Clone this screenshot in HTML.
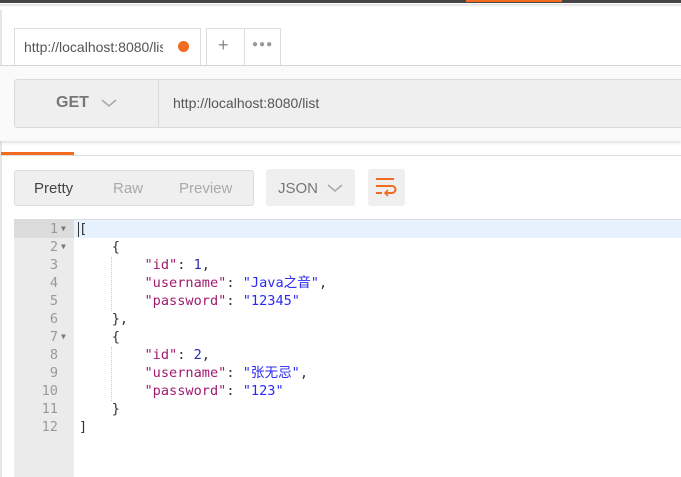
<!DOCTYPE html>
<html><head><meta charset="utf-8"><style>
*{margin:0;padding:0;box-sizing:border-box}
body{width:681px;height:477px;overflow:hidden;background:#fff;font-family:"Liberation Sans","Noto Sans CJK SC",sans-serif;position:relative}
.a{position:absolute}
.code{font-family:"DejaVu Sans Mono","Noto Sans CJK SC",monospace;font-size:13.6px;line-height:18px;white-space:pre}
.k{color:#a11a6f}.s{color:#2a2af0}.n{color:#2a2ab0}.p{color:#333}
.g{color:#999;text-align:right}
</style></head><body>
<div class="a" style="left:0;top:0;width:681px;height:3px;background:#464646"></div>
<div class="a" style="left:466px;top:0;width:96px;height:2px;background:#f26b21"></div>
<div class="a" style="left:0;top:4px;width:681px;height:3px;background:linear-gradient(#ddd,#fff)"></div>
<div class="a" style="left:0;top:10px;width:2px;height:467px;background:#e6e6e6"></div>
<div class="a" style="left:14px;top:28px;width:187px;height:38px;border:1px solid #ddd;border-bottom:none;background:#fff"></div>
<div class="a" style="left:24px;top:39px;font-size:14px;color:#555;width:139px;overflow:hidden;white-space:nowrap">http://localhost:8080/list</div>
<div class="a" style="left:178px;top:41px;width:11px;height:11px;border-radius:50%;background:#f26b21"></div>
<div class="a" style="left:206px;top:28px;width:75px;height:37px;border:1px solid #ddd;border-bottom:none;background:#fff"></div>
<div class="a" style="left:244px;top:28px;width:1px;height:37px;background:#ddd"></div>
<div class="a" style="left:218px;top:35px;font-size:18px;color:#888">+</div>
<div class="a" style="left:252px;top:39px;font-size:10px;color:#999;letter-spacing:1px">●●●</div>
<div class="a" style="left:0;top:65px;width:681px;height:1px;background:#d6d6d6"></div>
<div class="a" style="left:0;top:66px;width:681px;height:75px;background:#fafafa;box-shadow:0 2px 3px rgba(0,0,0,.12)"></div>
<div class="a" style="left:14px;top:79px;width:680px;height:49px;background:#efefef;border:1px solid #dadada;border-radius:3px"></div>
<div class="a" style="left:158px;top:80px;width:1px;height:47px;background:#dadada"></div>
<div class="a" style="left:56px;top:94px;font-size:16px;font-weight:bold;color:#777">GET</div>
<svg class="a" style="left:101px;top:98px" width="16" height="10"><path d="M1 2l7 6 7-6" stroke="#aaa" stroke-width="1.6" fill="none"/></svg>
<div class="a" style="left:173px;top:95px;font-size:14px;color:#555">http://localhost:8080/list</div>
<div class="a" style="left:1px;top:152px;width:73px;height:3px;background:#f26b21"></div>
<div class="a" style="left:0;top:155px;width:681px;height:1px;background:#ddd"></div>
<div class="a" style="left:14px;top:170px;width:240px;height:36px;background:#efefef;border:1px solid #ddd;border-radius:3px"></div>
<div class="a" style="left:34px;top:180px;font-size:15px;color:#444">Pretty</div>
<div class="a" style="left:113px;top:180px;font-size:15px;color:#aaa">Raw</div>
<div class="a" style="left:179px;top:180px;font-size:15px;color:#aaa">Preview</div>
<div class="a" style="left:266px;top:169px;width:89px;height:37px;background:#efefef;border-radius:3px"></div>
<div class="a" style="left:278px;top:180px;font-size:15px;color:#777">JSON</div>
<svg class="a" style="left:327px;top:183px" width="16" height="10"><path d="M1 2l7 6 7-6" stroke="#aaa" stroke-width="1.6" fill="none"/></svg>
<div class="a" style="left:368px;top:169px;width:37px;height:37px;background:#efefef;border-radius:3px"></div>
<svg class="a" style="left:374px;top:177px" width="24" height="22"><path d="M2 2h18M2 9h16a3.5 3.5 0 0 1 0 7h-6M2 16h6" stroke="#f26b21" stroke-width="2" fill="none"/><path d="M14 13l-3 3 3 3" stroke="#f26b21" stroke-width="1.6" fill="none"/></svg>
<div class="a" style="left:14px;top:219px;width:667px;height:1px;background:#ddd"></div>
<div class="a" style="left:14px;top:220px;width:60px;height:257px;background:#ebebeb"></div>
<div class="a" style="left:14px;top:220px;width:60px;height:18px;background:#dcdcdc"></div>
<div class="a" style="left:74px;top:220px;width:607px;height:18px;background:#e8f2fe"></div>
<div class="a" style="left:78px;top:222px;width:1px;height:15px;background:#333"></div>
<div class="a" style="left:111px;top:257px;border-left:1px dotted #ccc;height:54px"></div>
<div class="a" style="left:111px;top:347px;border-left:1px dotted #ccc;height:54px"></div>
<div class="a code g" style="left:14px;top:220px;width:44px">1
2
3
4
5
6
7
8
9
10
11
12</div>
<div class="a code" style="left:61px;top:220px;color:#777;font-size:8px">▼
▼




▼</div>
<div class="a code p" style="left:79px;top:220px">[
    {
        <span class="k">"id"</span>: <span class="n">1</span>,
        <span class="k">"username"</span>: <span class="s">"Java之音"</span>,
        <span class="k">"password"</span>: <span class="s">"12345"</span>
    },
    {
        <span class="k">"id"</span>: <span class="n">2</span>,
        <span class="k">"username"</span>: <span class="s">"张无忌"</span>,
        <span class="k">"password"</span>: <span class="s">"123"</span>
    }
]</div>
</body></html>
